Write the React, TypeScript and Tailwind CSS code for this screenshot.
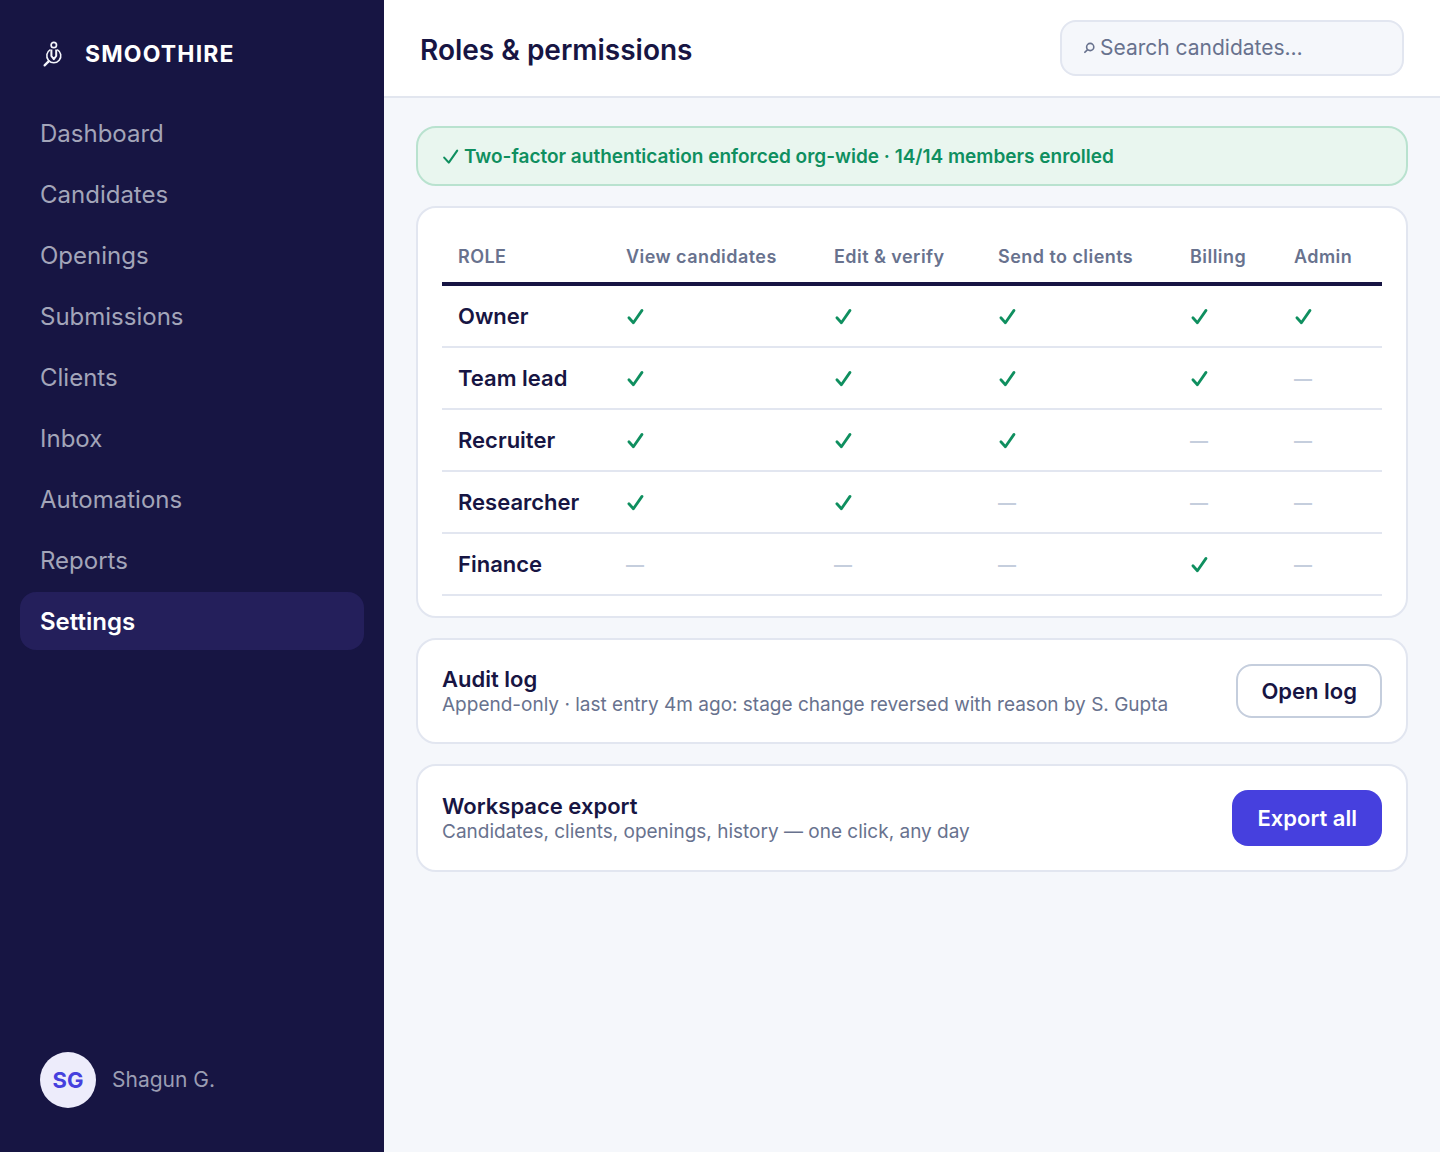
import React from 'react';

const navItems = [
  'Dashboard',
  'Candidates',
  'Openings',
  'Submissions',
  'Clients',
  'Inbox',
  'Automations',
  'Reports',
  'Settings',
];

const columns = [
  { label: 'ROLE', width: 'w-[168px]' },
  { label: 'View candidates', width: 'w-[208px]' },
  { label: 'Edit & verify', width: 'w-[164px]' },
  { label: 'Send to clients', width: 'w-[192px]' },
  { label: 'Billing', width: 'w-[104px]' },
  { label: 'Admin', width: 'w-[104px]' },
];

const roles = [
  { name: 'Owner', access: [true, true, true, true, true] },
  { name: 'Team lead', access: [true, true, true, true, false] },
  { name: 'Recruiter', access: [true, true, true, false, false] },
  { name: 'Researcher', access: [true, true, false, false, false] },
  { name: 'Finance', access: [false, false, false, true, false] },
];

const Logo = () => (
  <svg width="36" height="36" viewBox="0 0 36 36" fill="none" stroke="#f4f5fb" aria-hidden="true">
    <circle cx="17.8" cy="9" r="2.7" strokeWidth="1.7" />
    <path d="M14.4 13.6A7 7 0 1 0 21.2 13.6" strokeWidth="1.6" />
    <path d="M15.4 13.4V20L17.8 23.2L20.2 20V13.4" strokeWidth="2" strokeLinejoin="round" />
    <path d="M12.6 25.4L8.6 29.4" strokeWidth="2.2" strokeLinecap="round" />
  </svg>
);

const Check = ({ bold = false }: { bold?: boolean }) => (
  <svg
    width="18"
    height="18"
    viewBox="0 0 18 18"
    fill="none"
    stroke="#0f8f5f"
    strokeWidth={bold ? 2.8 : 2.1}
    strokeLinecap="round"
    strokeLinejoin="round"
    role="img"
    aria-label="Yes"
  >
    <path d={bold ? 'M2.9 9.8L7.4 14.8L16 2.4' : 'M2.2 9.6L6.8 14.6L15.2 2.6'} />
  </svg>
);

const Sidebar = () => (
  <aside className="flex w-96 shrink-0 flex-col bg-[#171543] px-5 pt-9 pb-11">
    <div className="flex items-center gap-[13px] pl-4">
      <Logo />
      <span className="text-[23px] leading-9 font-bold tracking-wider text-white">SMOOTHIRE</span>
    </div>

    <nav className="mt-8 flex flex-col gap-[3px]">
      {navItems.map((item) => (
        <a
          key={item}
          href="#"
          className={
            item === 'Settings'
              ? 'rounded-2xl bg-[#241f5b] px-5 pt-[15px] pb-[13px] text-2xl leading-[30px] font-semibold text-white'
              : 'rounded-2xl px-5 pt-[15px] pb-[13px] text-2xl leading-[30px] text-[#a3a5b9]'
          }
        >
          {item}
        </a>
      ))}
    </nav>

    <div className="mt-auto flex items-center gap-4 pl-5">
      <div className="flex size-14 items-center justify-center rounded-full bg-[#edecfb] text-[22px] font-bold text-[#4640de]">
        SG
      </div>
      <span className="text-[21px] text-[#9b9db3]">Shagun G.</span>
    </div>
  </aside>
);

const Header = () => (
  <header className="flex items-center justify-between border-b-2 border-[#e2e6ef] bg-white px-9 py-5">
    <h1 className="pt-1 text-[28px] leading-9 font-semibold">Roles &amp; permissions</h1>
    <label className="flex h-14 w-[344px] items-center gap-1 rounded-2xl border-2 border-[#e2e6f0] bg-[#f5f7fb] px-[22px] text-[#68728e]">
      <svg width="12" height="12" viewBox="0 0 12 12" fill="none" stroke="currentColor" strokeWidth="1.6" aria-hidden="true">
        <circle cx="6.2" cy="5" r="3.6" />
        <path d="M3.6 7.6L0.4 10.8" />
      </svg>
      <input
        type="text"
        aria-label="Search candidates"
        placeholder="Search candidates…"
        className="min-w-0 flex-1 bg-transparent text-[21px] outline-none placeholder:text-[#68728e]"
      />
    </label>
  </header>
);

const PermissionsTable = () => (
  <section className="rounded-[20px] border-2 border-[#e2e6f0] bg-white px-6 py-5">
    <table className="w-full table-fixed border-separate border-spacing-0 text-left">
      <thead>
        <tr className="h-[58px]">
          {columns.map((col) => (
            <th
              key={col.label}
              scope="col"
              className={`${col.width} border-b-4 border-[#171543] px-4 pt-1 text-lg font-semibold tracking-wide whitespace-nowrap text-[#68728e]`}
            >
              {col.label}
            </th>
          ))}
        </tr>
      </thead>
      <tbody>
        {roles.map((role) => (
          <tr key={role.name} className="h-[62px]">
            <th scope="row" className="border-b-2 border-[#e2e6f0] px-4 text-[22px] font-semibold whitespace-nowrap">
              {role.name}
            </th>
            {role.access.map((allowed, i) => (
              <td key={i} className="border-b-2 border-[#e2e6f0] px-4 pt-0.5 text-lg font-bold text-[#c5cedd]">
                {allowed ? <Check bold /> : '—'}
              </td>
            ))}
          </tr>
        ))}
      </tbody>
    </table>
  </section>
);

interface ActionCardProps {
  title: string;
  text: string;
  children: React.ReactNode;
}

const ActionCard = ({ title, text, children }: ActionCardProps) => (
  <section className="flex items-center justify-between gap-6 rounded-[20px] border-2 border-[#e2e6f0] bg-white p-6">
    <div className="pt-0.5">
      <h2 className="text-[22px] leading-[26px] font-semibold">{title}</h2>
      <p className="text-[19px] leading-[26px] text-[#68728e]">{text}</p>
    </div>
    {children}
  </section>
);

export default function App() {
  return (
    <div className="flex min-h-screen bg-[#f5f7fb] font-['Inter','Liberation_Sans',sans-serif] text-[#171543]">
      <Sidebar />
      <div className="flex min-w-0 flex-1 flex-col">
        <Header />
        <main className="flex flex-col gap-5 px-8 py-7">
          <div className="flex h-15 items-center gap-1 rounded-[20px] border-2 border-[#b9e2cf] bg-[#e9f6ef] px-6 pt-0.5 text-[19px] font-semibold text-[#0f8f5f]">
            <Check />
            <p>Two-factor authentication enforced org-wide · 14/14 members enrolled</p>
          </div>

          <PermissionsTable />

          <ActionCard title="Audit log" text="Append-only · last entry 4m ago: stage change reversed with reason by S. Gupta">
            <button type="button" className="shrink-0 rounded-2xl border-2 border-[#c5cedd] bg-white px-[23px] py-3 text-[22px] leading-[26px] font-semibold">
              Open log
            </button>
          </ActionCard>

          <ActionCard title="Workspace export" text="Candidates, clients, openings, history — one click, any day">
            <button type="button" className="shrink-0 rounded-2xl bg-[#4640de] px-[25px] py-[15px] text-[22px] leading-[26px] font-semibold text-white">
              Export all
            </button>
          </ActionCard>
        </main>
      </div>
    </div>
  );
}
